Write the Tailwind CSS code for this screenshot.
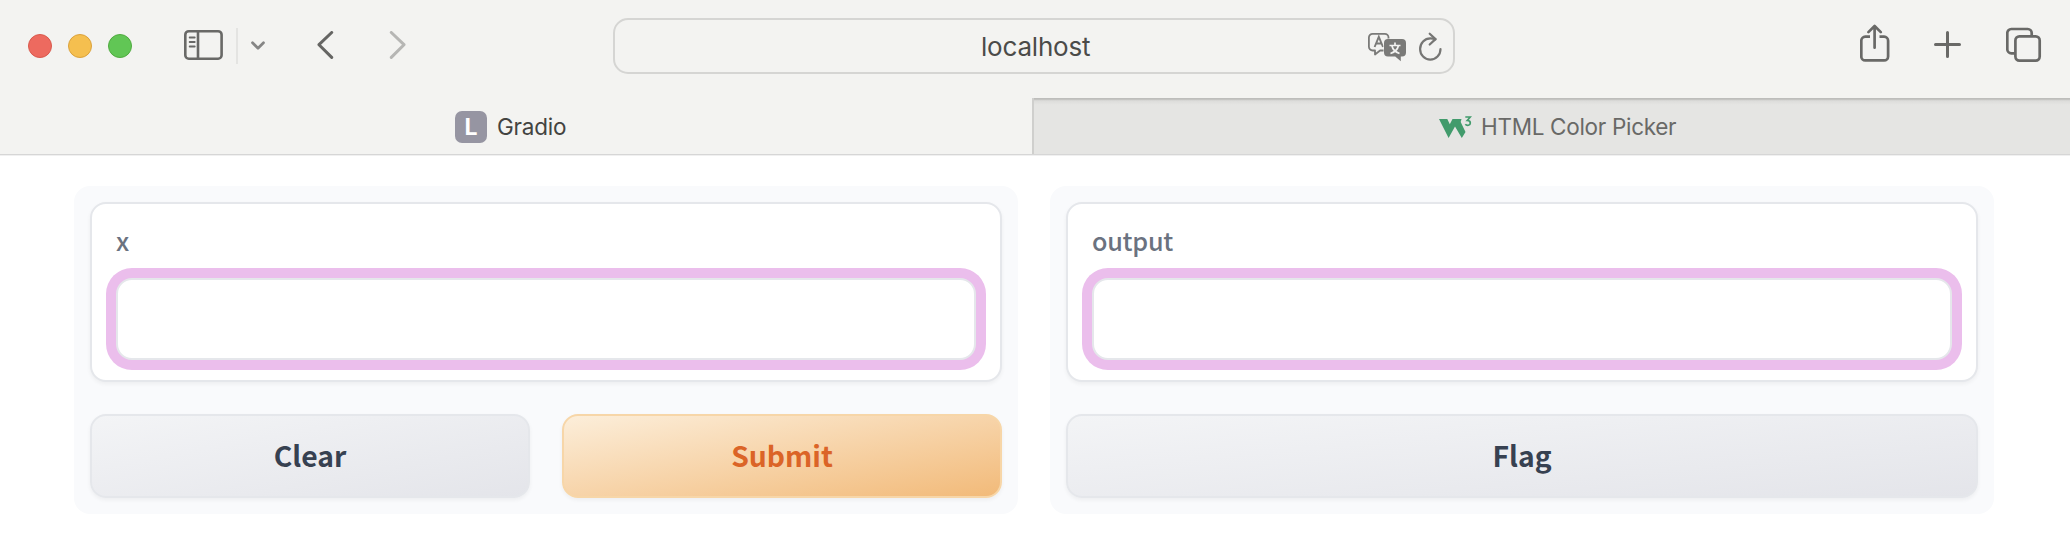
<!DOCTYPE html>
<html lang="en">
<head>
<meta charset="utf-8">
<title>Gradio</title>
<script src="https://cdn.jsdelivr.net/npm/@tailwindcss/browser@4"></script>
</head>
<body class="h-[548px] w-[2070px] overflow-hidden bg-white font-['Inter',sans-serif]">
<!-- Browser toolbar -->
<header class="flex h-[98px] items-start bg-[#f3f3f1] text-[#696967]">
  <div class="flex gap-4 pt-[34px] pl-7">
    <span class="size-6 rounded-full border border-[#d9594d] bg-[#ed6a5f]"></span>
    <span class="size-6 rounded-full border border-[#dba23c] bg-[#f5bf4f]"></span>
    <span class="size-6 rounded-full border border-[#50ab40] bg-[#61c655]"></span>
  </div>
  <svg class="ml-[52px] mt-[29px] h-8 w-[39px] shrink-0" viewBox="0 0 39 32" fill="none" stroke="currentColor" stroke-width="2.600">
    <rect x="1.300" y="2.200" width="36.300" height="27.500" rx="3.500"/>
    <path d="M14 2v28"/>
    <path d="M5.700 8.500h5M5.700 13.000h5M5.700 17.500h5" stroke-width="1.900" stroke-linecap="round"/>
  </svg>
  <span class="ml-[13px] mt-7 h-9 w-0.5 bg-[#e4e4e2]"></span>
  <svg class="ml-[13px] mt-[41px] h-[10px] w-[14px] shrink-0" viewBox="0 0 14 10" fill="none" stroke="#858585" stroke-width="2.7" stroke-linecap="round" stroke-linejoin="round"><path d="M1.500 1.700 7 7.300l5.500-5.600"/></svg>
  <svg class="ml-[52px] mt-[31px] h-7 w-[17px] shrink-0" viewBox="0 0 17 28" fill="none" stroke="#656563" stroke-width="3" stroke-linecap="round" stroke-linejoin="round"><path d="M14.700 1.500 2 13.700l12.700 12.700"/></svg>
  <svg class="ml-[55px] mt-[31px] h-7 w-[17px] shrink-0" viewBox="0 0 17 28" fill="none" stroke="#b6b6b4" stroke-width="3" stroke-linecap="round" stroke-linejoin="round"><path d="M2.300 1.500 15 13.700 2.300 26.400"/></svg>

  <div class="mt-[18px] ml-[207px] flex h-14 w-[842px] rounded-[15px] border-2 border-[#d5d5d3]">
    <div class="w-[753px] pl-[366px] text-[26px] leading-[54px] tracking-[-0.200px] text-[#4b4b49]">localhost</div>
    <svg class="mt-[12px] h-[30px] w-[38px] shrink-0" viewBox="0 0 38 30" fill="none" stroke="#7a7a78">
      <path d="M4.600 1.900h12.200a3.700 3.700 0 0 1 3.700 3.700v9.200a3.700 3.700 0 0 1-3.700 3.700h-4.700L7 22.500v-4H4.600A3.700 3.700 0 0 1 .9 14.800V5.600a3.700 3.700 0 0 1 3.700-3.700z" stroke-width="1.800" stroke-linejoin="round"/>
      <path d="m6.600 15 4.200-10.200L15 15M8.200 11.500h5.300" stroke-width="1.900"/>
      <path d="M20 7h14a4 4 0 0 1 4 4v9.500a4 4 0 0 1-4 4h-1.200v4.700l-5.600-4.700H20a4 4 0 0 1-4-4V11a4 4 0 0 1 4-4z" fill="#7a7a78" stroke="#f3f3f1" stroke-width="1" paint-order="stroke"/>
      <path d="M21.500 13.500h11M27 10.500v3M24 14c.7 3.500 3.500 6 7.500 7.500M30.300 14c-.7 3.500-3.500 6-7.800 7.500" stroke="#f3f3f1" stroke-width="1.700"/>
    </svg>
    <svg class="mt-[12px] ml-[13px] h-[30px] w-[23px] shrink-0" viewBox="0 0 23 30" fill="none" stroke="#767674" stroke-width="2.200" stroke-linecap="round" stroke-linejoin="round">
      <path d="M16.500 7.300C15 6.600 13.300 6.300 11.300 6.300A10.200 10.700 0 1 0 21.500 17"/><path d="m10.700 1.700 5.800 5.400-5.800 5.400"/>
    </svg>
  </div>

  <svg class="ml-[405px] mt-[24px] h-10 w-[30px] shrink-0" viewBox="0 0 30 40" fill="none" stroke="currentColor" stroke-width="2.700" stroke-linecap="round" stroke-linejoin="round">
    <path d="M10 12.700H5.300a4 4 0 0 0-4 4v15.700a4 4 0 0 0 4 4h18.800a4 4 0 0 0 4-4v-15.700a4 4 0 0 0-4-4H19.500" stroke-linecap="butt"/>
    <path d="M14.600 23.700V2.500M8.400 8.100l6.200-6.100 6.200 6.100"/>
  </svg>
  <svg class="ml-[44px] mt-[31px] h-[28px] w-[28px] shrink-0" viewBox="0 0 28 28" fill="none" stroke="currentColor" stroke-width="3" stroke-linecap="round"><path d="M13.500 1.500v24M1.500 13.500h24"/></svg>
  <svg class="ml-[44px] mt-[27px] h-9 w-9 shrink-0" viewBox="0 0 36 36" fill="none" stroke="currentColor" stroke-width="2.700">
    <rect x="9.400" y="9.400" width="24.300" height="24.200" rx="4"/>
    <path d="M25.700 9V6a4 4 0 0 0-4-4H5.300a4 4 0 0 0-4 4v16.300a4 4 0 0 0 4 4H9"/>
  </svg>
</header>

<!-- Tab strip -->
<nav class="flex h-14 bg-[#f3f3f1] text-[22.500px]">
  <div class="flex w-[1032px] pl-[455px] pt-[13px]">
    <span class="size-8 rounded-[7px] bg-[#9695a2] text-center text-[23px] leading-[33px] font-bold text-white">L</span>
    <span class="ml-[10px] leading-8 tracking-[-0.200px] text-[#434341]">Gradio</span>
  </div>
  <div class="flex flex-1 border-l-2 border-[#cfcfcd] bg-linear-to-b/srgb from-[#bdbdbb] from-[2%] via-[#dcdcda] via-[5%] to-[#e5e5e3] to-[12%] pl-[405px] pt-[13px]">
    <svg class="mt-[5px] h-6 w-[33px] shrink-0" viewBox="0 0 33 24" fill="#429b6c">
      <path d="M0 3h8.300l2.500 5.200L13.500 3h9l-.8 3 4.800 10-3.700 6-6.800-11.500L9.600 22z"/>
      <path d="M26.300 1h5l-3 3.500c2 0 3 1 3 2.400 0 2.600-3.400 3.200-5 1.300" fill="none" stroke="#429b6c" stroke-width="1.700"/>
    </svg>
    <span class="ml-[9px] whitespace-nowrap leading-8 tracking-[-0.300px] text-[#696967]">HTML Color Picker</span>
  </div>
</nav>
<div class="h-0.5 border-t border-[#d6d6d6] bg-[#f0f0f0]"></div>

<!-- Interface panels -->
<main class="grid grid-cols-2 gap-8 pt-[30px] pl-[74px] pr-[76px] font-['Noto_Sans_CJK_SC',sans-serif]">
  <section class="h-[328px] rounded-2xl bg-[#f9fafc] p-4">
    <div class="h-[180px] rounded-2xl border-2 border-[#e5e7eb] bg-white px-6 pt-[20px] shadow-[0_2px_4px_rgba(0,0,0,0.05)]">
      <label class="block h-[54px] text-[25.200px] font-medium tracking-[-0.250px] leading-[33px] text-[#6b7280]">x</label>
      <div class="h-[82px] rounded-2xl border-2 border-[#e5e7eb] bg-white shadow-[0_0_0_10px_#ebbeec]"></div>
    </div>
    <div class="mt-8 grid grid-cols-2 gap-8 text-center text-[28.300px] font-bold leading-[78px]">
      <button class="flex h-[84px] justify-center rounded-2xl border-2 border-[#e5e7eb] bg-linear-to-br/srgb from-[#f3f4f6] to-[#e4e5ea] text-[#374151] shadow-[0_2px_4px_rgba(0,0,0,0.05)]">Clear</button>
      <button class="flex h-[84px] justify-center rounded-2xl border-2 border-[#f7d6a8] bg-linear-to-br/srgb from-[#fceeda] to-[#f2ba79] text-[#db6427] shadow-[0_2px_4px_rgba(0,0,0,0.05)]">Submit</button>
    </div>
  </section>
  <section class="h-[328px] rounded-2xl bg-[#f9fafc] p-4">
    <div class="h-[180px] rounded-2xl border-2 border-[#e5e7eb] bg-white px-6 pt-[20px] shadow-[0_2px_4px_rgba(0,0,0,0.05)]">
      <label class="block h-[54px] text-[25.200px] font-medium tracking-[-0.250px] leading-[33px] text-[#6b7280]">output</label>
      <div class="h-[82px] rounded-2xl border-2 border-[#e5e7eb] bg-white shadow-[0_0_0_10px_#ebbeec]"></div>
    </div>
    <button class="mt-8 flex h-[84px] w-full justify-center rounded-2xl border-2 border-[#e5e7eb] bg-linear-to-br/srgb from-[#f3f4f6] to-[#e4e5ea] text-[28.300px] font-bold leading-[78px] text-[#374151] shadow-[0_2px_4px_rgba(0,0,0,0.05)]">Flag</button>
  </section>
</main>
</body>
</html>
